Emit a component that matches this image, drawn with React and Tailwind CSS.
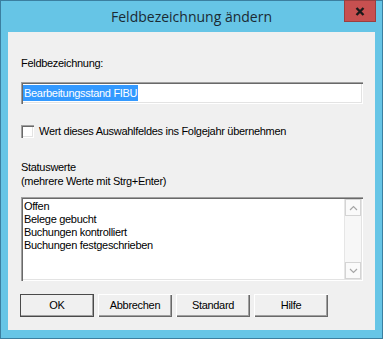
import React from "react";

// Win32-Dialog: Feldbezeichnung ändern
const sunken =
  "shadow-[inset_1px_1px_#a0a0a0,inset_2px_2px_#696969,inset_-1px_-1px_#ffffff,inset_-2px_-2px_#e3e3e3]";
const raised =
  "shadow-[inset_1px_1px_#ffffff,inset_-1px_-1px_#696969,inset_-2px_-2px_#a0a0a0]";

const STATUS = ["Offen", "Belege gebucht", "Buchungen kontrolliert", "Buchungen festgeschrieben"];

function Chevron({ up }) {
  return (
    <svg width="9" height="6" viewBox="0 0 9 6">
      <path
        d={up ? "M1 5 L4.5 1.5 L8 5" : "M1 1 L4.5 4.5 L8 1"}
        fill="none"
        stroke="#a6a6a6"
        strokeWidth="1.2"
      />
    </svg>
  );
}

function DlgButton({ children, primary }) {
  return (
    <button
      type="button"
      className={`w-[74px] h-[23px] bg-[#f0f0f0] text-black flex items-center justify-center ${raised} ${
        primary ? "outline outline-1 outline-[#4a4a4a] -outline-offset-1" : ""
      }`}
    >
      {children}
    </button>
  );
}

export default function App() {
  return (
    <div className="w-[383px] h-[339px] bg-[#66c5e6] border border-[#3b7fa0] flex flex-col">
      {/* Titelleiste */}
      <div className="relative h-[31px] flex items-center justify-center">
        <span className="font-['Open_Sans',sans-serif] text-[14px] text-[#1b2a33] pb-[1px]">
          Feldbezeichnung ändern
        </span>
        <button
          type="button"
          className="absolute right-[6px] -top-px w-[32px] h-[22px] bg-[#c75050] border border-[#9b3f3f] flex items-center justify-center"
        >
          <svg width="10" height="9" viewBox="0 0 10 9">
            <path d="M1.5 1 L8.5 8 M8.5 1 L1.5 8" stroke="#1a1a1a" strokeWidth="2.4" />
          </svg>
        </button>
      </div>

      {/* Client-Bereich */}
      <div className="mx-[7px] h-[298px] bg-[#f0f0f0] pl-[13px] pr-[12px] pt-[25px] flex flex-col text-[11px] leading-[13px] tracking-[-0.3px] text-black font-['Liberation_Sans',Arial,sans-serif]">
        <div>Feldbezeichnung:</div>

        <div className={`mt-[12px] h-[22px] bg-white flex items-center pl-[2px] ${sunken}`}>
          <span className="bg-[#3399ff] text-white px-[1px] leading-[16px]">Bearbeitungsstand FIBU</span>
        </div>

        <label className="mt-[21px] h-[13px] flex items-center gap-[5px]">
          <span className={`w-[13px] h-[13px] bg-white ${sunken}`} />
          <span>Wert dieses Auswahlfeldes ins Folgejahr übernehmen</span>
        </label>

        <div className="mt-[22px] leading-[14px]">
          <div>Statuswerte</div>
          <div>(mehrere Werte mit Strg+Enter)</div>
        </div>

        {/* Liste mit Scrollbar */}
        <div className={`mt-[9px] h-[84px] bg-white p-[2px] flex ${sunken}`}>
          <ul className="flex-1 pl-[1px] pt-[1px]">
            {STATUS.map((s) => (
              <li key={s}>{s}</li>
            ))}
          </ul>
          <div className="w-[17px] flex flex-col bg-[#f7f7f7] border-l border-[#e6e6e6]">
            <div className="h-[17px] flex items-center justify-center border border-[#d4d4d4] bg-[#fafafa]">
              <Chevron up />
            </div>
            <div className="flex-1" />
            <div className="h-[17px] flex items-center justify-center border border-[#d4d4d4] bg-[#fafafa]">
              <Chevron />
            </div>
          </div>
        </div>

        {/* Schaltflächen */}
        <div className="mt-[13px] -ml-px flex gap-[4px]">
          <DlgButton primary>OK</DlgButton>
          <DlgButton>Abbrechen</DlgButton>
          <DlgButton>Standard</DlgButton>
          <DlgButton>Hilfe</DlgButton>
        </div>
      </div>
    </div>
  );
}
